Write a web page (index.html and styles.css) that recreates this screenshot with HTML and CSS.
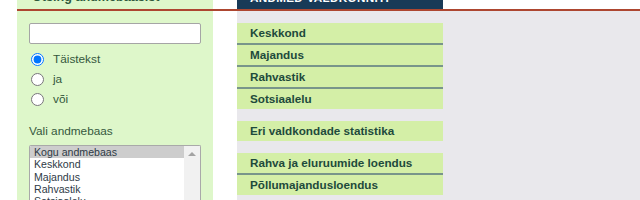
FILE: index.html
```html
<!DOCTYPE html>
<html lang="et">
<head>
<meta charset="utf-8">
<title>Statistika andmebaas</title>
<link rel="stylesheet" href="styles.css">
</head>
<body>
<div class="page">
  <header class="top">
    <div class="search-head"><span class="head-text">Otsing andmebaasist</span></div>
    <div class="db-head"><span class="head-text">ANDMED VALDKONNITI</span></div>
  </header>
  <div class="content">
    <aside class="search">
      <input class="query" type="text" aria-label="Otsing">
      <div class="radios">
        <label class="radio-row"><input type="radio" name="mode" checked><span>Täistekst</span></label>
        <label class="radio-row"><input type="radio" name="mode"><span>ja</span></label>
        <label class="radio-row"><input type="radio" name="mode"><span>või</span></label>
      </div>
      <div class="db-label">Vali andmebaas</div>
      <div class="listbox">
        <ul class="options">
          <li class="option selected">Kogu andmebaas</li>
          <li class="option">Keskkond</li>
          <li class="option">Majandus</li>
          <li class="option">Rahvastik</li>
          <li class="option">Sotsiaalelu</li>
        </ul>
        <div class="scrollbar"><span class="arrow-up"></span></div>
      </div>
    </aside>
    <nav class="domains">
      <ul class="group">
        <li class="item">Keskkond</li>
        <li class="item">Majandus</li>
        <li class="item">Rahvastik</li>
        <li class="item">Sotsiaalelu</li>
      </ul>
      <ul class="group">
        <li class="item">Eri valdkondade statistika</li>
      </ul>
      <ul class="group">
        <li class="item">Rahva ja eluruumide loendus</li>
        <li class="item">Põllumajandusloendus</li>
      </ul>
    </nav>
  </div>
</div>
</body>
</html>
```
FILE: styles.css
```css
* { box-sizing: border-box; }
html, body { margin: 0; padding: 0; background: #ffffff; }
body { font-family: "Liberation Sans", Arial, sans-serif; width: 640px; height: 200px; overflow: hidden; }

.page { padding-left: 17px; }

.top {
  display: flex;
  height: 11px;
  border-bottom: 2px solid #ad4630;
}
.search-head, .db-head {
  display: flex;
  align-items: flex-end;
  overflow: hidden;
  height: 9px;
  padding-bottom: 5px;
}
.search-head {
  width: 196px;
  background: #def7ca;
  padding-left: 15px;
  color: #2f5a3c;
  font-size: 12.6px;
  font-weight: bold;
}
.db-head {
  width: 206px;
  margin-left: 24px;
  background: #183a57;
  padding-left: 13px;
  color: #ffffff;
  font-size: 11.7px;
  font-weight: bold;
  letter-spacing: 0.3px;
}
.head-text { line-height: 1; white-space: nowrap; }

.content { display: flex; min-height: 189px; }

.search {
  width: 196px;
  background: #def7ca;
  padding: 12px 12px 0 12px;
  color: #35573d;
  font-size: 11.8px;
}
.query {
  display: block;
  width: 172px;
  height: 21px;
  margin: 0;
  border: 1px solid #a5a5a5;
  border-radius: 2px;
  background: #ffffff;
}
.radios { margin-top: 5px; }
.radio-row {
  display: flex;
  align-items: center;
  height: 20px;
}
.radio-row input {
  width: 13px;
  height: 13px;
  margin: 0 9px 0 2px;
}
.db-label {
  margin-top: 15px;
  line-height: 14px;
}
.listbox {
  display: flex;
  margin-top: 7px;
  width: 172px;
  height: 70px;
  border: 1px solid #a9a9a9;
  border-bottom: none;
  border-radius: 2px 2px 0 0;
  background: #ffffff;
  overflow: hidden;
}
.options {
  flex: 1;
  list-style: none;
  margin: 0;
  padding: 0;
  font-size: 10.6px;
  color: #2e3a46;
}
.option {
  height: 12.3px;
  line-height: 12.3px;
  padding-left: 4px;
  white-space: nowrap;
}
.option.selected { background: #cdcdcd; }
.scrollbar {
  width: 16px;
  background: #f1f1f1;
  display: flex;
  justify-content: center;
  padding-top: 6px;
}
.arrow-up {
  width: 0;
  height: 0;
  border-left: 4px solid transparent;
  border-right: 4px solid transparent;
  border-bottom: 4px solid #a3a3a3;
}

.domains {
  flex: 1;
  margin-left: 24px;
  background: #e9e8ec;
  padding-top: 12px;
}
.group {
  list-style: none;
  margin: 0 0 12px 0;
  padding: 0;
  width: 206px;
}
.item {
  height: 20px;
  line-height: 20px;
  padding-left: 13px;
  background: #d4efa7;
  color: #1e4a3c;
  font-size: 11.7px;
  font-weight: bold;
  white-space: nowrap;
}
.item + .item {
  border-top: 2px solid #78958a;
  height: 22px;
  line-height: 20px;
}
```
